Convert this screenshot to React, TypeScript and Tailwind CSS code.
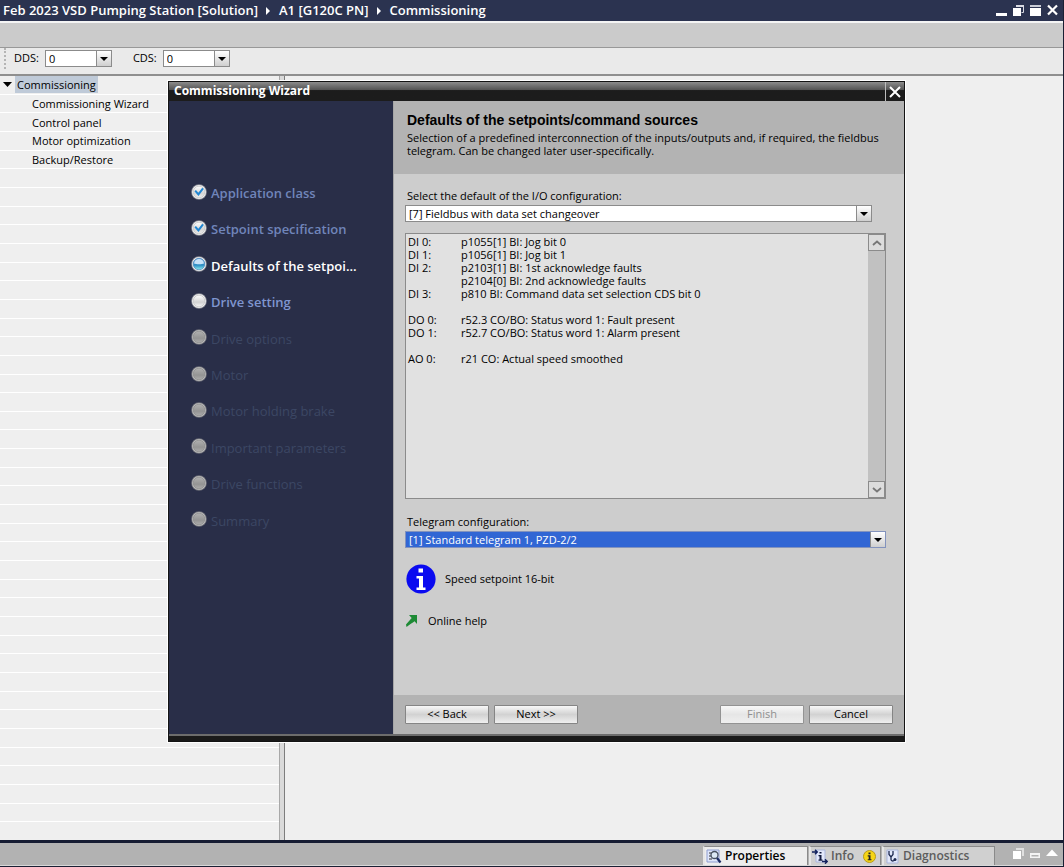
import { useId, useState } from "react";

type StepState = "done" | "current" | "open" | "disabled";

const steps: { label: string; state: StepState }[] = [
  { label: "Application class", state: "done" },
  { label: "Setpoint specification", state: "done" },
  { label: "Defaults of the setpoi...", state: "current" },
  { label: "Drive setting", state: "open" },
  { label: "Drive options", state: "disabled" },
  { label: "Motor", state: "disabled" },
  { label: "Motor holding brake", state: "disabled" },
  { label: "Important parameters", state: "disabled" },
  { label: "Drive functions", state: "disabled" },
  { label: "Summary", state: "disabled" },
];

const stepText: Record<StepState, string> = {
  done: "font-semibold text-[#7085ba]",
  current: "font-semibold text-white",
  open: "font-semibold text-[#7f95cf]",
  disabled: "font-medium text-[#3c4764]",
};

const ioRows: [string, string][] = [
  ["DI 0:", "p1055[1] BI: Jog bit 0"],
  ["DI 1:", "p1056[1] BI: Jog bit 1"],
  ["DI 2:", "p2103[1] BI: 1st acknowledge faults"],
  ["", "p2104[0] BI: 2nd acknowledge faults"],
  ["DI 3:", "p810 BI: Command data set selection CDS bit 0"],
  ["", ""],
  ["DO 0:", "r52.3 CO/BO: Status word 1: Fault present"],
  ["DO 1:", "r52.7 CO/BO: Status word 1: Alarm present"],
  ["", ""],
  ["AO 0:", "r21 CO: Actual speed smoothed"],
];

const treeItems = ["Commissioning Wizard", "Control panel", "Motor optimization", "Backup/Restore"];
const emptyRows = Array.from({ length: 36 }, (_, i) => i);

function StepIcon({ state }: { state: StepState }) {
  const id = useId();
  const colors: Record<StepState, [string, string, string]> = {
    done: ["#ffffff", "#d4d4d4", "#eeeeee"],
    current: ["#3f86c8", "#2f8fc4", "#8ff0f0"],
    open: ["#ffffff", "#d2d2d2", "#f6f6f6"],
    disabled: ["#b0b0b0", "#949494", "#acacac"],
  };
  const [a, b, c] = colors[state];
  const off = state === "disabled";
  return (
    <svg width="16" height="16" viewBox="0 0 16 16" aria-hidden="true" className="shrink-0">
      <defs>
        <linearGradient id={id} x1="0" y1="0" x2="0" y2="1">
          <stop offset="0" stopColor={a} />
          <stop offset="0.6" stopColor={b} />
          <stop offset="1" stopColor={c} />
        </linearGradient>
      </defs>
      <circle cx="8" cy="8" r="7.8" fill={off ? "#6f7079" : "#8a8c96"} />
      <circle cx="8" cy="8" r="7" fill={off ? "#bababa" : "#f0f0f0"} />
      <circle cx="8" cy="8" r="5.8" fill={`url(#${id})`} stroke={off ? "#8b8b8b" : state === "current" ? "#4a86bd" : "#c2c2c2"} strokeWidth="0.7" />
      {state === "current" && <path d="M3 7.600C3.200 4.600 5.200 3 8 3s4.800 1.600 5 4.600c-2 .9-8 .9-10 0Z" fill="#c8e2f8" />}
      {state === "done" && <path d="M4.200 6.700 7.400 10.400 12 4.300" fill="none" stroke="#2186d2" strokeWidth="2" />}
    </svg>
  );
}

function Combo({
  label,
  options,
  box,
  tone = "bg-white text-black border-[#8b8b8b]",
}: {
  label: string;
  options: string[];
  box: string;
  tone?: string;
}) {
  const id = useId();
  return (
    <>
      <label htmlFor={id}>{label}</label>
      <div className={`relative flex h-[17px] border ${tone} ${box}`}>
        <select id={id} className="w-full appearance-none bg-transparent pl-[3px] pr-4 leading-[15px] outline-none">
          {options.map((o) => (
            <option key={o}>{o}</option>
          ))}
        </select>
        <span className="pointer-events-none absolute inset-y-0 right-0 flex w-[15px] items-center justify-center border-l border-[#8b8b8b] bg-linear-to-b from-white to-[#cfcfcf]">
          <svg width="8" height="4" viewBox="0 0 8 4" aria-hidden="true">
            <path d="M0 0h8L4 4Z" fill="#000" />
          </svg>
        </span>
      </div>
    </>
  );
}

function WizardButton({ children, disabled = false }: { children: string; disabled?: boolean }) {
  return (
    <button
      type="button"
      disabled={disabled}
      className="h-[19px] w-[84px] rounded-[1px] border border-[#858585] bg-linear-to-b from-[#f8f8f8] via-[#d2d2d2] to-[#efefef] pb-[2px] leading-[15px] text-black disabled:border-[#939393] disabled:via-[#e6e6e6] disabled:text-[#8f8f8f]"
    >
      {children}
    </button>
  );
}

function Crumb() {
  return (
    <svg width="5" height="8" viewBox="0 0 5 8" aria-hidden="true">
      <path d="M0 0 4 4 0 8Z" fill="#fff" />
    </svg>
  );
}

function TitleBar() {
  return (
    <header className="flex h-[21px] items-center justify-between bg-[#2b3350] pl-[3px] pr-[5px] text-[13px] font-semibold text-white">
      <nav aria-label="Breadcrumb" className="flex items-center gap-2 whitespace-nowrap">
        <span>Feb 2023 VSD Pumping Station [Solution]</span>
        <Crumb />
        <span>A1 [G120C PN]</span>
        <Crumb />
        <span>Commissioning</span>
      </nav>
      <div className="flex items-center gap-[6px] pb-px">
        <button type="button" aria-label="Minimize">
          <svg width="11" height="12" viewBox="0 0 11 12"><path d="M0 9h11v3H0Z" fill="#fff" /></svg>
        </button>
        <button type="button" aria-label="Float">
          <svg width="11" height="12" viewBox="0 0 11 12">
            <path d="M3.500 1.500h7v7h-2" fill="none" stroke="#d8dae2" strokeWidth="1" />
            <path d="M3 1h8v2H3Z" fill="#d8dae2" />
            <path d="M0 4h8v8H0Z" fill="#fff" />
          </svg>
        </button>
        <button type="button" aria-label="Maximize">
          <svg width="11" height="12" viewBox="0 0 11 12"><path d="M0 1h11v2H0Z" fill="#c9ccd6" /><path d="M0 4h11v8H0Z" fill="#fff" /></svg>
        </button>
        <button type="button" aria-label="Close">
          <svg width="11" height="12" viewBox="0 0 11 12"><path d="M1 1.500 10 10.500M10 1.500 1 10.500" stroke="#fff" strokeWidth="2.200" /></svg>
        </button>
      </div>
    </header>
  );
}

function Wizard() {
  const [open, setOpen] = useState(true);
  if (!open) return null;
  return (
    <section
      role="dialog"
      aria-label="Commissioning Wizard"
      className="absolute left-[168px] top-[81px] flex w-[737px] flex-col border border-[#141414] bg-[#1c1c1c] outline outline-white"
    >
      <div className="flex h-[19px] justify-between bg-linear-to-b from-[#8c8c8c] from-0% via-[#555] via-40% to-[#1c1c1c] to-45%">
        <h1 className="pl-[5px] text-[12px] font-bold leading-[18px] text-white">Commissioning Wizard</h1>
        <button type="button" aria-label="Close" onClick={() => setOpen(false)} className="flex w-[19px] items-center justify-center border-l border-[#bdbdbd]">
          <svg width="12" height="12" viewBox="0 0 12 12"><path d="M1 1 11 11M11 1 1 11" stroke="#fff" strokeWidth="2" /></svg>
        </button>
      </div>
      <div className="flex">
        <aside className="w-[224px] shrink-0 bg-[#292e48] pt-[74px]">
          <ol className="grid h-[364px] grid-rows-10 pl-[22px]">
            {steps.map((s) => (
              <li key={s.label} className={`flex items-center gap-1 text-[13px] ${stepText[s.state]}`}>
                <span className="pb-[3px]"><StepIcon state={s.state} /></span>
                <span className="pt-px">{s.label}</span>
              </li>
            ))}
          </ol>
        </aside>
        <div className="flex min-w-0 flex-1 flex-col border-l border-[#a6a6a6] bg-[#cdcdcd]">
          <div className="h-[73px] bg-[#b3b3b3] px-[13px] pt-3">
            <h2 className="font-['Liberation_Sans',Arial,sans-serif] text-[14px] font-bold leading-[14px]">Defaults of the setpoints/command sources</h2>
            <p className="pt-1 leading-[13px]">
              Selection of a predefined interconnection of the inputs/outputs and, if required, the fieldbus
              <br />
              telegram. Can be changed later user-specifically.
            </p>
          </div>
          <div className="flex h-[521px] flex-col px-[11px]">
            <div className="pt-[13px] leading-[17px] [&>label]:block [&>label]:pb-px [&>label]:pl-[2px]">
              <Combo label="Select the default of the I/O configuration:" options={["[7] Fieldbus with data set changeover"]} box="w-[467px]" />
            </div>
            <div className="mt-[11px] flex h-[266px] w-[481px] border border-[#8b8b8b] bg-[#e1e1e1]">
              <div className="flex-1 pl-[2px] pt-px">
                <table className="border-collapse leading-[13px]">
                  <tbody>
                    {ioRows.map(([port, signal], i) => (
                      <tr key={i} className="h-[13px]">
                        <td className="w-[53px] p-0">{port}</td>
                        <td className="p-0">{signal}</td>
                      </tr>
                    ))}
                  </tbody>
                </table>
              </div>
              <div className="flex w-[17px] flex-col justify-between bg-[#c1c1c1]">
                <button type="button" aria-label="Scroll up" className="flex h-[17px] items-center justify-center border border-[#8b8b8b] bg-[#dcdcdc]">
                  <svg width="10" height="6" viewBox="0 0 10 6"><path d="M1 5 5 1.500 9 5" fill="none" stroke="#777" strokeWidth="1.800" /></svg>
                </button>
                <button type="button" aria-label="Scroll down" className="flex h-[17px] items-center justify-center border border-[#8b8b8b] bg-[#dcdcdc]">
                  <svg width="10" height="6" viewBox="0 0 10 6"><path d="M1 1 5 4.500 9 1" fill="none" stroke="#777" strokeWidth="1.800" /></svg>
                </button>
              </div>
            </div>
            <div className="pt-[14px] leading-[17px] [&>label]:block [&>label]:pb-px [&>label]:pl-[2px]">
              <Combo label="Telegram configuration:" options={["[1] Standard telegram 1, PZD-2/2"]} box="w-[481px]" tone="bg-[#3166d4] text-white border-[#8393bd]" />
            </div>
            <div className="flex items-center gap-[9px] pl-px pt-4">
              <svg width="30" height="30" viewBox="0 0 30 30" aria-hidden="true">
                <circle cx="15" cy="15" r="14.600" fill="#0a0af0" />
                <path d="M12.500 4.500h4.500v4h-4.500ZM10.500 12H17v11.500h2.500V26h-9v-2.500H13v-9h-2.500Z" fill="#fff" />
              </svg>
              <span>Speed setpoint 16-bit</span>
            </div>
            <a href="#help" className="mt-[18px] flex items-center gap-[10px] leading-[17px]">
              <svg width="13" height="14" viewBox="0 0 13 14" aria-hidden="true">
                <path d="M4 1h8v9L9.500 7.300C7.500 9 5.500 10 1.500 13L1 10.500 6.700 4Z" fill="#1d8a35" />
              </svg>
              <span>Online help</span>
            </a>
          </div>
          <div className="flex h-[39px] items-center justify-between bg-[#b3b3b3] px-[11px]">
            <div className="flex gap-[5px]">
              <WizardButton>{"<< Back"}</WizardButton>
              <WizardButton>{"Next >>"}</WizardButton>
            </div>
            <div className="flex gap-[5px]">
              <WizardButton disabled>Finish</WizardButton>
              <WizardButton>Cancel</WizardButton>
            </div>
          </div>
        </div>
      </div>
      <div className="h-[7px] border-t-2 border-[#6c6c6c] bg-[#1a1a1a]" />
    </section>
  );
}

function BottomBar() {
  const tab = "flex h-[19px] items-center border border-b-0 border-l-2 border-[#8a8a8a] border-l-[#e6e6e6] text-[12px] font-semibold";
  return (
    <footer className="flex h-[26px] items-end justify-end border-b border-t-3 border-b-[#d8d8d8] border-t-[#161c33] bg-[#b2b2b2]">
      <div role="tablist" className="flex gap-px">
        <button type="button" role="tab" aria-selected="true" className={`${tab} w-[105px] gap-[3px] bg-[#ededed] pl-px text-black`}>
          <svg width="16" height="15" viewBox="0 0 16 15" aria-hidden="true">
            <path d="M1 1h12v12H1Z" fill="#dfe6fa" stroke="#8d9dd0" />
            <path d="M3 4h3M3 7h2M3 10h3" stroke="#333" />
            <circle cx="8.500" cy="6" r="3.500" fill="#dce9f5" stroke="#46505f" strokeWidth="1.300" />
            <path d="M11 9 14.500 13.500" stroke="#1c2b63" strokeWidth="2.200" />
          </svg>
          Properties
        </button>
        <button type="button" role="tab" className={`${tab} w-[72px] gap-[3px] bg-[#d0d0d0] pl-px text-[#5c5c5c]`}>
          <svg width="16" height="15" viewBox="0 0 16 15" aria-hidden="true">
            <path d="M4 1h9v12H4Z" fill="#e2e8fb" stroke="#a9b5dc" />
            <path d="M0 3h5M3 .8 5.300 3 3 5.200M10 12.500h5M13 10.300l2.200 2.200-2.200 2.200" fill="none" stroke="#10205c" strokeWidth="1.400" />
            <path d="M7.500 3h2v1.600h-2ZM6.500 6h3v4.500h1v1.300H6.500v-1.300h1V7.200h-1Z" fill="#10183c" />
          </svg>
          Info
          <svg width="13" height="13" viewBox="0 0 13 13" aria-hidden="true" className="ml-[6px]">
            <circle cx="6.500" cy="6.500" r="6" fill="#f6d516" stroke="#b59a1c" />
            <path d="M5.500 2.500h2v1.700h-2ZM4.700 5.300h2.800v3.900h1v1.100H4.700V9.200h1V6.400h-1Z" fill="#222" />
          </svg>
        </button>
        <button type="button" role="tab" className={`${tab} w-[113px] gap-1 bg-[#d0d0d0] pl-[2px] text-[#5c5c5c]`}>
          <svg width="13" height="15" viewBox="0 0 13 15" aria-hidden="true">
            <path d="M1 1h11v13H1Z" fill="#e2e8fb" stroke="#a9b5dc" />
            <path d="M3 2v3.500l2 2.500 2-2.500V2M5 8v2.500c0 2 3.500 2 3.500 0" fill="none" stroke="#1c2850" strokeWidth="1.300" />
            <circle cx="9" cy="10.500" r="1.500" fill="#1c2850" />
          </svg>
          Diagnostics
        </button>
      </div>
      <div className="ml-[18px] mr-[5px] flex items-center gap-[6px] pb-[6px]">
        <button type="button" aria-label="Float panel">
          <svg width="11" height="11" viewBox="0 0 11 11"><path d="M3 0h8v8H9V2H3Z" fill="#e0e0e0" /><path d="M0 3h8v8H0Z" fill="#fff" /></svg>
        </button>
        <button type="button" aria-label="Restore panel">
          <svg width="10" height="11" viewBox="0 0 10 11"><path d="M0 5h10v5H0Zm1.500 2v1.500h7V7Z" fill="#f4f4f4" fillRule="evenodd" /></svg>
        </button>
        <button type="button" aria-label="Expand panel">
          <svg width="12" height="11" viewBox="0 0 12 11"><path d="M0 8 6 1.500 12 8Z" fill="#fff" /></svg>
        </button>
      </div>
    </footer>
  );
}

export default function App() {
  return (
    <div className="relative flex min-h-screen flex-col border-b border-r border-[#1a1f33] bg-[#efefef] font-['Open_Sans','Noto_Sans',sans-serif] text-[11px] text-black">
      <TitleBar />
      <div className="h-[27px] border-b border-t-2 border-b-[#989898] border-t-[#f4f4f4] bg-[#cbcbcb]" />
      <div className="flex h-[28px] items-center border-b-2 border-[#8f8f8f] bg-[#eaeaea] pb-[5px] pl-1">
        <span className="h-[21px] border-l-2 border-dotted border-[#b4b4b4]" />
        <div className="flex items-center gap-[6px] pl-2">
          <Combo label="DDS:" options={["0"]} box="w-[67px]" />
        </div>
        <div className="flex items-center gap-[6px] pl-[21px]">
          <Combo label="CDS:" options={["0"]} box="w-[67px]" />
        </div>
      </div>
      <main className="flex flex-1">
        <ul className="flex w-[279px] flex-col">
          <li className="flex flex-1 items-center gap-[3px] border-b border-white pl-[3px]">
            <svg width="9" height="5" viewBox="0 0 9 5" aria-hidden="true"><path d="M0 0h9L4.500 5Z" fill="#000" /></svg>
            <span className="bg-[#bfcad8] px-[2px] leading-[17px]">Commissioning</span>
          </li>
          {treeItems.map((t) => (
            <li key={t} className="flex flex-1 items-center border-b border-white pl-[32px] leading-[17px]">
              {t}
            </li>
          ))}
          {emptyRows.map((i) => (
            <li key={i} className="flex-1 border-b border-white last:border-0" />
          ))}
        </ul>
        <div className="w-[6px] border-l border-r border-l-[#a8a8a8] border-r-[#7d7d7d] bg-[#dadada]" />
      </main>
      <BottomBar />
      <Wizard />
    </div>
  );
}
